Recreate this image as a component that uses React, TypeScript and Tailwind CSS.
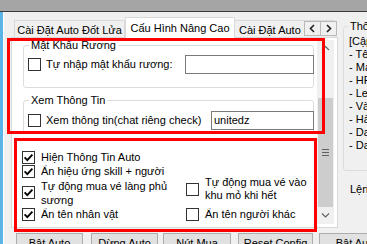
import React from 'react';

function CheckBox({ checked = false }: { checked?: boolean }) {
  return (
    <span className="w-[13px] h-[13px] shrink-0 border border-[#333333] bg-white flex items-center justify-center">
      {checked && (
        <svg width="11" height="11" viewBox="0 0 11 11">
          <path d="M1.6 5.4 L4.3 8.1 L9.4 2.6" fill="none" stroke="#000" strokeWidth="1.9" />
        </svg>
      )}
    </span>
  );
}

function Chevron({ dir }: { dir: 'left' | 'right' | 'up' | 'down' }) {
  const pts = {
    left: '5,1 1.5,4.5 5,8',
    right: '2,1 5.5,4.5 2,8',
    up: '1,5 4.5,1.5 8,5',
    down: '1,1.5 4.5,5 8,1.5',
  }[dir];
  const horiz = dir === 'left' || dir === 'right';
  return (
    <svg width={horiz ? 7 : 9} height={horiz ? 9 : 7} viewBox={horiz ? '0 0 7 9' : '0 0 9 7'}>
      <polyline points={pts} fill="none" stroke={horiz ? '#222' : '#606060'} strokeWidth={horiz ? 1.6 : 1.1} />
    </svg>
  );
}

const infoLines = [
  '[Cập nhật thông tin]',
  '- Tên nhân vật:',
  '- Map hiện tại:',
  '- HP / MP:',
  '- Level:',
  '- Vàng:',
  '- Hành trang:',
  '- Danh vọng:',
  '- Danh hiệu:',
];

const buttons = [
  { label: 'Bật Auto', w: 'w-[67px]', ml: 'ml-0' },
  { label: 'Dừng Auto', w: 'w-[67px]', ml: 'ml-[8px]' },
  { label: 'Nút Mua', w: 'w-[68px]', ml: 'ml-[5px]' },
  { label: 'Reset Config', w: 'w-[75px]', ml: 'ml-[7px]' },
  { label: 'Bật Auto', w: 'w-[75px]', ml: 'ml-[6px]' },
];

export default function App() {
  return (
    <div className="w-[367px] h-[244px] overflow-hidden relative bg-[#f0f0f0] text-black text-[11px] leading-[13px] font-['Liberation_Sans',Arial,sans-serif] flex flex-col">
      <div className="h-[12px] shrink-0 bg-[#a5a5a5] border-b border-[#3c3c3c]" />

      <div className="flex-1 flex min-h-0">
        <div className="w-[3px] shrink-0 bg-[#5ab4e6]" />
        <div className="w-px shrink-0 bg-white" />

        <div className="flex-1 flex flex-col min-w-0">
          <div className="flex items-start">
            {/* tab control */}
            <div className="w-[327px] shrink-0 mt-[5px] ml-[7px] flex flex-col">
              <div className="relative z-10 h-[20px] flex items-end pl-[3px]">
                <div className="w-[111px] h-[17px] border border-b-0 border-[#d9d9d9] bg-[#f0f0f0] text-center pt-[3px] whitespace-nowrap">
                  Cài Đặt Auto Đốt Lửa
                </div>
                <div className="w-[110px] h-[21px] -mb-px border border-b-0 border-[#d9d9d9] bg-white text-center pt-[4px] whitespace-nowrap">
                  Cấu Hình Nâng Cao
                </div>
                <div className="w-[100px] h-[17px] border border-b-0 border-l-0 border-[#d9d9d9] bg-[#f0f0f0] pl-[4px] pt-[3px] whitespace-nowrap overflow-hidden">
                  Cài Đặt Auto Chuyển Map
                </div>
                <div className="absolute right-[1px] top-[4px] flex">
                  <div className="w-[17px] h-[15px] border border-[#b9b9b9] bg-[#f0f0f0] flex items-center justify-center">
                    <Chevron dir="left" />
                  </div>
                  <div className="w-[16px] h-[15px] border border-l-0 border-[#b9b9b9] bg-[#f0f0f0] flex items-center justify-center">
                    <Chevron dir="right" />
                  </div>
                </div>
              </div>

              <div className="h-[191px] border border-[#d9d9d9] bg-white flex">
                <div className="flex-1 min-w-0 overflow-hidden">
                  <fieldset className="ml-[11px] mt-[1px] w-[291px] border border-[#dcdcdc] rounded-[3px]">
                    <legend className="ml-[5px] px-[2px] leading-[13px]">Mật Khẩu Rương</legend>
                    <div className="pt-[3px] pb-[13px] pl-[4px]">
                      <div className="h-[19px] flex items-center">
                        <CheckBox />
                        <span className="ml-[5px] whitespace-nowrap">Tự nhập mật khẩu rương:</span>
                        <div className="ml-auto -mr-px w-[129px] h-[19px] border border-[#7a7a7a] bg-white" />
                      </div>
                    </div>
                  </fieldset>

                  <fieldset className="ml-[11px] mt-[6px] w-[291px] border border-[#dcdcdc] rounded-[3px]">
                    <legend className="ml-[5px] px-[2px] leading-[13px]">Xem Thông Tin</legend>
                    <div className="pt-[4px] pb-[3px] pl-[4px]">
                      <div className="h-[19px] flex items-center">
                        <CheckBox />
                        <span className="ml-[5px] whitespace-nowrap">Xem thông tin(chat riêng check)</span>
                        <div className="ml-auto -mr-px w-[103px] h-[19px] border border-[#7a7a7a] bg-white pl-[2px] pt-[2px]">
                          unitedz
                        </div>
                      </div>
                    </div>
                  </fieldset>

                  <div className="mt-[16px] ml-[10px] flex">
                    <div className="w-[164px] shrink-0 flex flex-col">
                      <div className="h-[14px] flex items-center gap-[6px]">
                        <CheckBox checked />
                        <span className="whitespace-nowrap">Hiện Thông Tin Auto</span>
                      </div>
                      <div className="h-[14px] flex items-center gap-[6px]">
                        <CheckBox checked />
                        <span className="whitespace-nowrap">Ẩn hiệu ứng skill + người</span>
                      </div>
                      <div className="h-[29px] flex items-center gap-[6px]">
                        <CheckBox checked />
                        <span className="w-[140px] leading-[14px]">Tự động mua vé làng phủ sương</span>
                      </div>
                      <div className="h-[14px] flex items-center gap-[6px]">
                        <CheckBox checked />
                        <span className="whitespace-nowrap">Ẩn tên nhân vật</span>
                      </div>
                    </div>
                    <div className="flex flex-col pt-[26px]">
                      <div className="h-[26px] flex items-center gap-[6px]">
                        <CheckBox />
                        <span className="w-[110px] leading-[13px]">Tự động mua vé vào khu mỏ khi hết</span>
                      </div>
                      <div className="mt-[5px] h-[14px] flex items-center gap-[6px]">
                        <CheckBox />
                        <span className="whitespace-nowrap">Ẩn tên người khác</span>
                      </div>
                    </div>
                  </div>
                </div>

                {/* vertical scrollbar */}
                <div className="w-[17px] shrink-0 mt-[2px] mb-[3px] mr-[3px] bg-[#f0f0f0] flex flex-col">
                  <div className="h-[17px] flex items-center justify-center">
                    <Chevron dir="up" />
                  </div>
                  <div className="h-[41px]" />
                  <div className="h-[109px] mx-[1px] bg-[#cdcdcd] flex flex-col items-center justify-center gap-[2px]">
                    <div className="w-[7px] h-px bg-[#606060]" />
                    <div className="w-[7px] h-px bg-[#606060]" />
                    <div className="w-[7px] h-px bg-[#606060]" />
                  </div>
                  <div className="h-[17px] flex items-center justify-center">
                    <Chevron dir="down" />
                  </div>
                </div>
              </div>
            </div>

            {/* right info column */}
            <div className="w-[160px] shrink-0 ml-[5px] mt-[8px]">
              <fieldset className="border border-[#dcdcdc] rounded-[3px]">
                <legend className="ml-[4px] px-[2px] leading-[13px] whitespace-nowrap">Thông Tin Nhân Vật</legend>
                <div className="pl-[5px] pt-[2px] pb-[18px] leading-[13px] whitespace-nowrap">
                  {infoLines.map((line, i) => (
                    <div key={i}>{line}</div>
                  ))}
                </div>
              </fieldset>
              <div className="mt-[12px] pl-[7px] whitespace-nowrap">Lệnh điều khiển:</div>
            </div>
          </div>

          <div className="flex mt-[5px] ml-[12px]">
            {buttons.map((b, i) => (
              <div
                key={i}
                className={`${b.w} ${b.ml} shrink-0 h-[23px] border border-[#adadad] bg-[#e1e1e1] text-center pt-[3px] whitespace-nowrap`}
              >
                {b.label}
              </div>
            ))}
          </div>
        </div>
      </div>

      {/* red annotation boxes */}
      <div className="absolute left-[7px] top-[38px] w-[318px] h-[96px] border-[3px] border-[#ff0000] pointer-events-none" />
      <div className="absolute left-[14px] top-[138px] w-[303px] h-[94px] border-[3px] border-[#ff0000] pointer-events-none" />
    </div>
  );
}
